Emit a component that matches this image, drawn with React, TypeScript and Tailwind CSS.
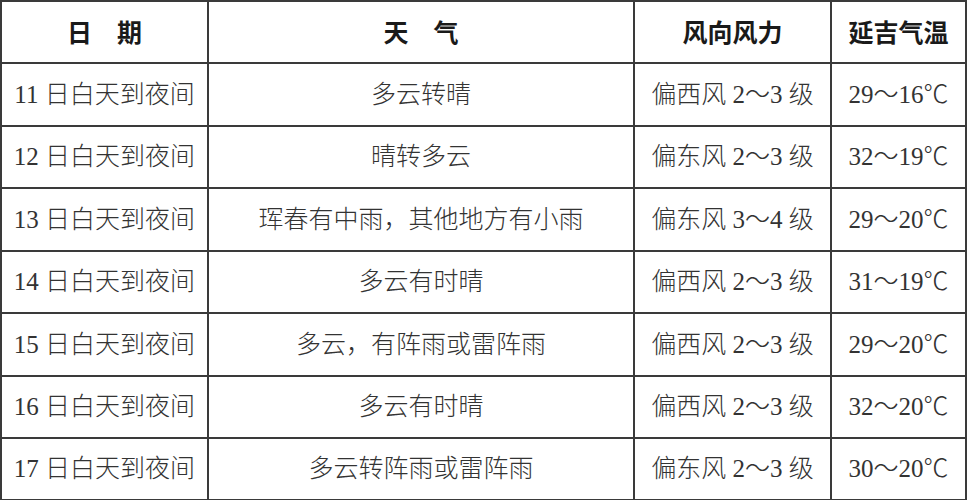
const rows = [
	['11 日白天到夜间', '多云转晴', '偏西风 2～3 级', '29～16℃'],
	['12 日白天到夜间', '晴转多云', '偏东风 2～3 级', '32～19℃'],
	['13 日白天到夜间', '珲春有中雨，其他地方有小雨', '偏东风 3～4 级', '29～20℃'],
	['14 日白天到夜间', '多云有时晴', '偏西风 2～3 级', '31～19℃'],
	['15 日白天到夜间', '多云，有阵雨或雷阵雨', '偏西风 2～3 级', '29～20℃'],
	['16 日白天到夜间', '多云有时晴', '偏西风 2～3 级', '32～20℃'],
	['17 日白天到夜间', '多云转阵雨或雷阵雨', '偏东风 2～3 级', '30～20℃'],
];

const headers = ['日\u3000期', '天\u3000气', '风向风力', '延吉气温'];

export default function App() {
	return (
		<div className="w-[968px] h-[500px] bg-white overflow-hidden">
			<div className="grid w-fit grid-cols-[205px_424px_195px_133px] grid-rows-[60px_61px_60px_61px_60px_61px_60px_60px] gap-[2px] p-[2px] bg-[#3a3a3a]">
				{headers.map((h) => (
					<div
						key={h}
						className="flex items-center justify-center bg-white text-[25px] font-bold text-[#1a1a1a] font-['Noto_Sans_CJK_SC',sans-serif]"
					>
						{h}
					</div>
				))}
				{rows.map((r) =>
					r.map((c, i) => (
						<div
							key={r[0] + i}
							className="flex items-center justify-center bg-white text-[25px] text-[#333] font-light whitespace-nowrap font-['Liberation_Serif','Noto_Sans_CJK_SC',serif]"
						>
							{c}
						</div>
					)),
				)}
			</div>
		</div>
	);
}
